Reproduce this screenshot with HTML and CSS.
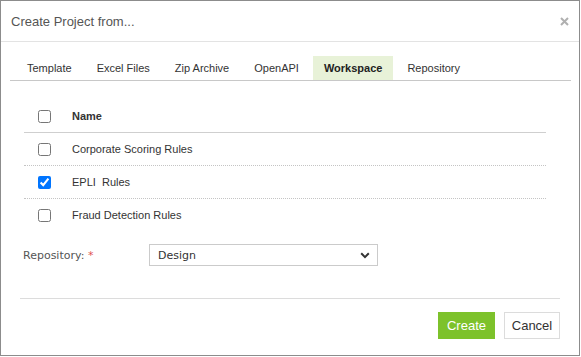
FILE: index.html
```html
<!DOCTYPE html>
<html>
<head>
<meta charset="utf-8">
<link rel="stylesheet" href="styles.css">
</head>
<body>
<div class="dialog">
  <div class="header">
    <span class="title">Create Project from...</span>
    <svg class="close" width="9" height="9" viewBox="0 0 9 9"><path d="M1 1L8 8M8 1L1 8" stroke="#b0b0b0" stroke-width="2"/></svg>
  </div>
  <div class="tabs">
    <div class="tab">Template</div>
    <div class="tab">Excel Files</div>
    <div class="tab">Zip Archive</div>
    <div class="tab">OpenAPI</div>
    <div class="tab active">Workspace</div>
    <div class="tab">Repository</div>
  </div>
  <div class="table">
    <div class="row head">
      <div class="cb"><input type="checkbox"></div>
      <div class="name">Name</div>
    </div>
    <div class="row">
      <div class="cb"><input type="checkbox"></div>
      <div class="name">Corporate Scoring Rules</div>
    </div>
    <div class="row">
      <div class="cb"><input type="checkbox" checked></div>
      <div class="name">EPLI&nbsp; Rules</div>
    </div>
    <div class="row last">
      <div class="cb"><input type="checkbox"></div>
      <div class="name">Fraud Detection Rules</div>
    </div>
  </div>
  <div class="form-row">
    <label class="label">Repository: <span class="req">*</span></label>
    <div class="select">
      <span>Design</span>
      <svg width="10" height="7" viewBox="0 0 10 7"><path d="M1.2 1.3L5 5.1L8.8 1.3" fill="none" stroke="#333" stroke-width="2"/></svg>
    </div>
  </div>
  <div class="footer">
    <button class="btn primary">Create</button>
    <button class="btn">Cancel</button>
  </div>
</div>
</body>
</html>
```
FILE: styles.css
```css
html, body {
  margin: 0;
  padding: 0;
  background: #fff;
}
body {
  font-family: "Liberation Sans", Arial, sans-serif;
  color: #333;
}
.dialog {
  width: 578px;
  height: 354px;
  border: 1px solid #8c8c8c;
  background: #fff;
  display: flex;
  flex-direction: column;
}
.header {
  height: 40px;
  border-bottom: 1px solid #e3e3e3;
  display: flex;
  align-items: center;
  justify-content: space-between;
  padding: 0 10px 0 10px;
}
.title {
  font-size: 13px;
  color: #555;
}
.close {
  margin-right: 0;
}
.tabs {
  display: flex;
  margin: 14px 8px 0 9px;
  padding-left: 6px;
  border-bottom: 1px solid #c8c8c8;
  height: 24px;
}
.tab {
  font-size: 11px;
  line-height: 24px;
  padding: 0 11px;
  margin-right: 3px;
  color: #333;
}
.tab.active {
  background: #e8f2d8;
  font-weight: bold;
  color: #222;
}
.table {
  margin: 19px 33px 0 23px;
}
.row {
  display: flex;
  align-items: center;
  height: 32px;
  border-bottom: 1px dotted #c4c4c4;
  font-size: 11px;
}
.row.head {
  border-bottom: 1px solid #cfcfcf;
}
.row.head .name {
  font-weight: bold;
}
.row.last {
  border-bottom: none;
}
.cb {
  width: 34px;
  padding-left: 14px;
  display: flex;
  align-items: center;
}
.cb input {
  margin: 0;
  width: 13px;
  height: 13px;
}
.name {
  color: #333;
}
.form-row {
  display: flex;
  align-items: center;
  margin: 13px 0 0 22px;
}
.label {
  width: 126px;
  font-family: "DejaVu Sans", Verdana, sans-serif;
  font-size: 11px;
  color: #555;
}
.req {
  color: #e05050;
}
.select {
  width: 212px;
  height: 20px;
  border: 1px solid #cbcbcb;
  display: flex;
  align-items: center;
  justify-content: space-between;
  padding: 0 7px 0 8px;
  font-family: "DejaVu Sans", Verdana, sans-serif;
  font-size: 11px;
  color: #333;
}
.footer {
  margin: 32px 19px 0 19px;
  border-top: 1px solid #dcdcdc;
  padding-top: 13px;
  display: flex;
  justify-content: flex-end;
  gap: 9px;
}
.btn {
  height: 27px;
  width: 56px;
  font-family: "Liberation Sans", Arial, sans-serif;
  font-size: 13px;
  color: #333;
  background: #fff;
  border: 1px solid #dcdcdc;
  padding: 0;
  margin: 0;
}
.btn.primary {
  width: 57px;
  background: #7dc22b;
  border-color: #7dc22b;
  color: #fff;
}
```
